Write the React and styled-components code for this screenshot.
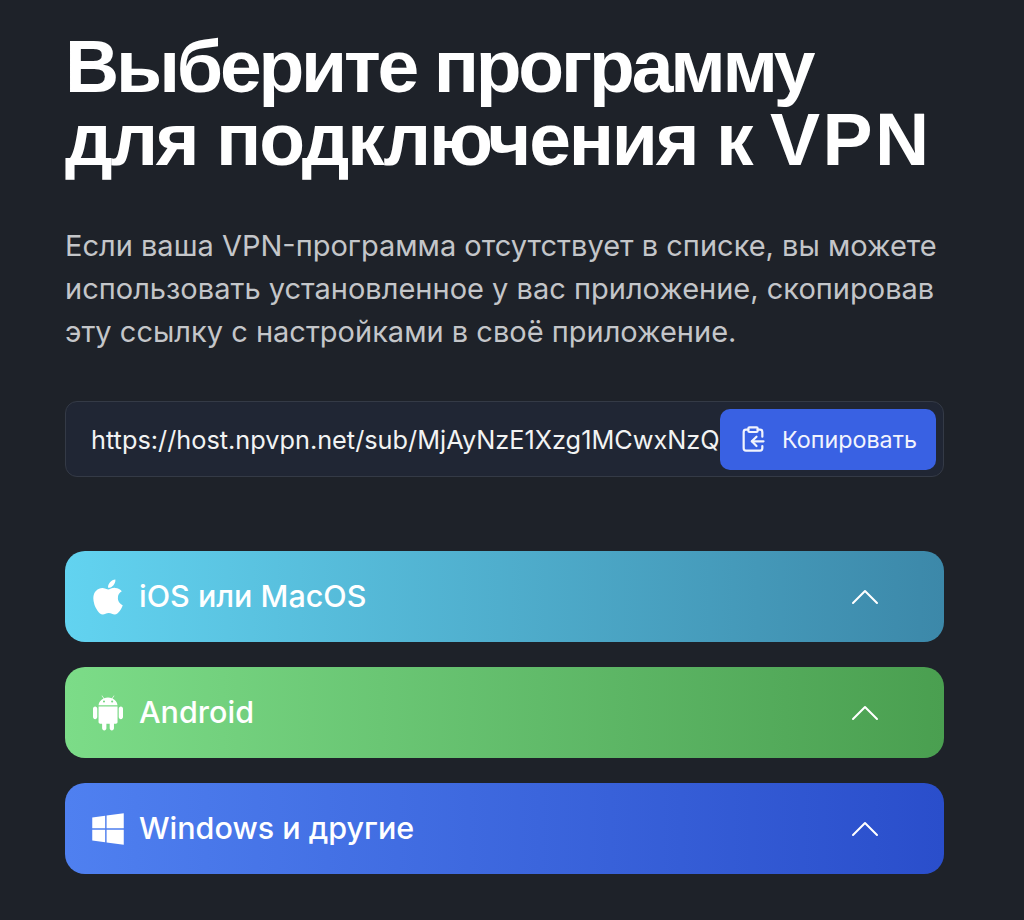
import React from "react";
import styled, { createGlobalStyle } from "styled-components";
import { FaApple, FaWindows } from "react-icons/fa";
import { AiFillAndroid } from "react-icons/ai";
import { ChevronUp, ClipboardCopy } from "lucide-react";

const GlobalStyle = createGlobalStyle`
  html, body {
    margin: 0;
    background: #1e2229;
    font-family: Inter, "Noto Sans", sans-serif;
  }
`;

const platforms = [
  { name: "iOS или MacOS", icon: <FaApple />, size: 40, from: "#62d3f0", to: "#3c88a9" },
  { name: "Android", icon: <AiFillAndroid />, size: 40, from: "#7cdc88", to: "#4a9f50" },
  { name: "Windows и другие", icon: <FaWindows />, size: 36, from: "#4f80f0", to: "#2a4ecb" },
];

function App() {
  return (
    <Page>
      <GlobalStyle />
      <Title>
        <TitleLine $tracking={-3.2}>Выберите программу</TitleLine>
        <TitleLine $tracking={-2.2}>
          для подключения к <Acronym>VPN</Acronym>
        </TitleLine>
      </Title>
      <Lead>
        Если ваша VPN-программа отсутствует в списке, вы можете
        <br />
        использовать установленное у вас приложение, скопировав
        <br />
        эту ссылку с настройками в своё приложение.
      </Lead>
      <LinkBox>
        <LinkText>https://host.npvpn.net/sub/MjAyNzE1Xzg1MCwxNzQ</LinkText>
        <CopyButton>
          <ClipboardCopy size={28} strokeWidth={1.9} />
          Копировать
        </CopyButton>
      </LinkBox>
      <Platforms>
        {platforms.map((p) => (
          <Platform key={p.name} $from={p.from} $to={p.to}>
            <PlatformIcon $size={p.size}>{p.icon}</PlatformIcon>
            <PlatformName>{p.name}</PlatformName>
            <Chevron size={48} strokeWidth={1} />
          </Platform>
        ))}
      </Platforms>
    </Page>
  );
}

const Page = styled.div`
  width: 879px;
  height: 920px;
  box-sizing: border-box;
  margin-left: 65px;
  padding-top: 30px;
  overflow: hidden;
`;

const Title = styled.h1`
  margin: 0;
  color: #fff;
  font-family: "Liberation Sans", Arial, sans-serif;
  font-size: 75px;
  line-height: 73px;
  font-weight: 700;
  white-space: nowrap;
`;

const TitleLine = styled.div`
  letter-spacing: ${(p) => p.$tracking}px;
`;

const Acronym = styled.span`
  letter-spacing: 2.5px;
`;

const Lead = styled.p`
  margin: 48px 0 0;
  color: #c4c6c9;
  font-size: 29px;
  line-height: 43px;
  font-weight: 400;
  white-space: nowrap;
`;

const LinkBox = styled.div`
  display: flex;
  align-items: center;
  height: 76px;
  box-sizing: border-box;
  margin-top: 48px;
  padding: 0 7px 0 25px;
  background: #202634;
  border: 1px solid #343a46;
  border-radius: 12px;
`;

const LinkText = styled.div`
  flex: 1;
  white-space: nowrap;
  color: #f2f3f3;
  font-size: 25.3px;
`;

const CopyButton = styled.button`
  display: flex;
  align-items: center;
  justify-content: center;
  gap: 15px;
  width: 216px;
  height: 61px;
  padding: 0;
  flex: none;
  border: 0;
  border-radius: 10px;
  background: #3961e3;
  color: #f2f4fd;
  font-family: inherit;
  font-size: 23.3px;
  font-weight: 400;
`;

const Platforms = styled.div`
  display: flex;
  flex-direction: column;
  gap: 25px;
  margin-top: 74px;
`;

const Platform = styled.div`
  display: flex;
  align-items: center;
  height: 91px;
  padding: 0 67px 0 26px;
  border-radius: 20px;
  color: #fff;
  background: linear-gradient(90deg, ${(p) => p.$from}, ${(p) => p.$to});
`;

const PlatformIcon = styled.span`
  display: flex;
  justify-content: center;
  width: 34px;
  margin-right: 14px;
  font-size: ${(p) => p.$size}px;

  svg {
    flex: none;
  }
`;

const PlatformName = styled.span`
  flex: 1;
  padding-bottom: 2px;
  font-size: 30.5px;
  font-weight: 500;
`;

const Chevron = styled(ChevronUp)`
  flex: none;
  margin: -12px;
`;

export default App;
